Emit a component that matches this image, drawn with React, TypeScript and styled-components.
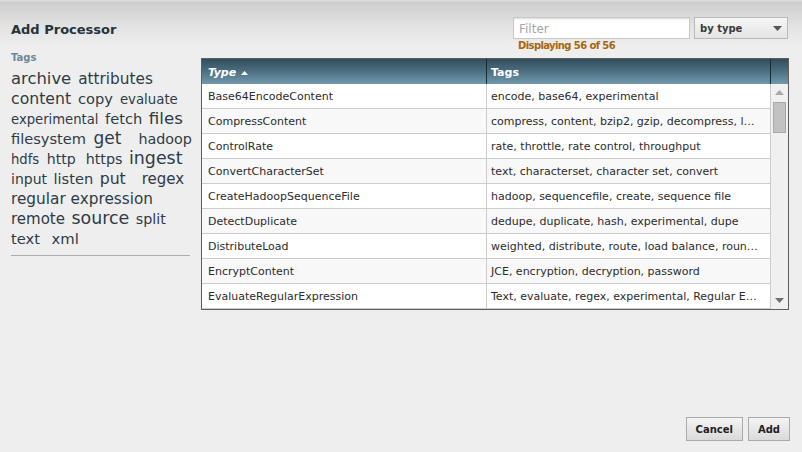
import React from 'react';
import styled, { createGlobalStyle } from 'styled-components';

const GlobalStyle = createGlobalStyle`
    html, body {
        margin: 0;
        padding: 0;
    }
    body {
        font-family: "DejaVu Sans", Verdana, sans-serif;
        background: #eeeeee;
    }
`;

type Tag = { name: string; size: number; gap?: number };

// the cloud, line by line as it wraps in the dialog
const cloud: Tag[][] = [
    [{ name: 'archive', size: 16.4 }, { name: 'attributes', size: 15.3, gap: 7 }],
    [{ name: 'content', size: 15.7 }, { name: 'copy', size: 14.6, gap: 7 }, { name: 'evaluate', size: 13.3, gap: 7 }],
    [{ name: 'experimental', size: 13.2 }, { name: 'fetch', size: 14.7, gap: 6.5 }, { name: 'files', size: 16.7, gap: 6.5 }],
    [{ name: 'filesystem', size: 14.6 }, { name: 'get', size: 17, gap: 7.5 }, { name: 'hadoop', size: 14.3, gap: 17 }],
    [{ name: 'hdfs', size: 13.2 }, { name: 'http', size: 14.1, gap: 7.5 }, { name: 'https', size: 14.3, gap: 10 }, { name: 'ingest', size: 17.4, gap: 6.5 }],
    [{ name: 'input', size: 14 }, { name: 'listen', size: 14.6, gap: 6.5 }, { name: 'put', size: 15.7, gap: 6.5 }, { name: 'regex', size: 15, gap: 16 }],
    [{ name: 'regular expression', size: 15.3 }],
    [{ name: 'remote', size: 15 }, { name: 'source', size: 17.4, gap: 6.5 }, { name: 'split', size: 14.3, gap: 6.5 }],
    [{ name: 'text', size: 14.7 }, { name: 'xml', size: 14.8, gap: 11.5 }],
];

const processors = [
    { type: 'Base64EncodeContent', tags: 'encode, base64, experimental' },
    { type: 'CompressContent', tags: 'compress, content, bzip2, gzip, decompress, lzma, xz-lzma2, snappy' },
    { type: 'ControlRate', tags: 'rate, throttle, rate control, throughput' },
    { type: 'ConvertCharacterSet', tags: 'text, characterset, character set, convert' },
    { type: 'CreateHadoopSequenceFile', tags: 'hadoop, sequencefile, create, sequence file' },
    { type: 'DetectDuplicate', tags: 'dedupe, duplicate, hash, experimental, dupe' },
    { type: 'DistributeLoad', tags: 'weighted, distribute, route, load balance, round robin' },
    { type: 'EncryptContent', tags: 'JCE, encryption, decryption, password' },
    { type: 'EvaluateRegularExpression', tags: 'Text, evaluate, regex, experimental, Regular Expression' },
];

const Arrow = ({ up, color }: { up?: boolean; color: string }) => (
    <svg width="9" height="5" viewBox="0 0 9 5">
        <polygon points={up ? '0,5 9,5 4.5,0' : '0,0 9,0 4.5,5'} fill={color} />
    </svg>
);

const App = () => {
    return (
        <Dialog>
            <GlobalStyle />
            <Main>
                <Sidebar>
                    <Title>Add Processor</Title>
                    <TagsLabel>Tags</TagsLabel>
                    <Cloud>
                        {cloud.map((line, i) => (
                            <CloudLine key={i}>
                                {line.map((t) => (
                                    <CloudTag key={t.name} $size={t.size} $gap={t.gap || 0}>
                                        {t.name}
                                    </CloudTag>
                                ))}
                            </CloudLine>
                        ))}
                    </Cloud>
                    <Divider />
                </Sidebar>
                <Content>
                    <FilterRow>
                        <FilterGroup>
                            <FilterInput placeholder="Filter" />
                            <Displaying>Displaying 56 of 56</Displaying>
                        </FilterGroup>
                        <SelectBox>
                            <span>by type</span>
                            <Arrow color="#555" />
                        </SelectBox>
                    </FilterRow>
                    <Table>
                        <HeaderRow>
                            <HeaderCell $width={285} $pad={6} $italic>
                                Type
                                <SortMark>
                                    <svg width="7" height="4" viewBox="0 0 7 4">
                                        <polygon points="0,4 7,4 3.5,0" fill="#fff" />
                                    </svg>
                                </SortMark>
                            </HeaderCell>
                            <HeaderCell $width={284} $pad={4}>Tags</HeaderCell>
                            <HeaderCell $width={17} $pad={0} $last />
                        </HeaderRow>
                        <Body>
                            <Rows>
                                {processors.map((p, i) => (
                                    <Row key={p.type} $alt={i % 2 === 1}>
                                        <Cell $width={285} $pad={6}>{p.type}</Cell>
                                        <Cell $width={284} $pad={4}>{p.tags}</Cell>
                                    </Row>
                                ))}
                            </Rows>
                            <ScrollTrack>
                                <ScrollArrow>
                                    <Arrow up color="#a8a8a8" />
                                </ScrollArrow>
                                <ScrollThumb />
                                <TrackFill />
                                <ScrollArrow>
                                    <Arrow color="#707070" />
                                </ScrollArrow>
                            </ScrollTrack>
                        </Body>
                    </Table>
                </Content>
            </Main>
            <Footer>
                <Button>Cancel</Button>
                <Button>Add</Button>
            </Footer>
        </Dialog>
    );
};

export default App;

const Dialog = styled.div`
    box-sizing: border-box;
    width: 802px;
    height: 452px;
    padding: 17px 13px 11px 11px;
    display: flex;
    flex-direction: column;
    background: linear-gradient(to bottom, #e2e2e2 0px, #cdcdcd 2px, #e4e4e4 28px, #eeeeee 46px, #eeeeee 100%);
    overflow: hidden;
`;

const Main = styled.div`
    display: flex;
    align-items: flex-start;
`;

const Sidebar = styled.div`
    width: 179px;
    margin-right: 11px;
    display: flex;
    flex-direction: column;
`;

const Title = styled.div`
    margin-top: 5px;
    font-size: 13px;
    line-height: 16px;
    font-weight: bold;
    color: #27323c;
`;

const TagsLabel = styled.div`
    margin-top: 14px;
    font-size: 10px;
    line-height: 12px;
    font-weight: bold;
    color: #6d8899;
`;

const Cloud = styled.div`
    margin-top: 5px;
    font-size: 15px;
`;

const CloudLine = styled.div`
    line-height: 20px;
    white-space: nowrap;
`;

const CloudTag = styled.span<{ $size: number; $gap: number }>`
    display: inline;
    font-size: ${(p) => p.$size}px;
    line-height: 1;
    margin-left: ${(p) => p.$gap}px;
    color: #2f3b46;
    cursor: pointer;
`;

const Divider = styled.div`
    margin-top: 6px;
    height: 1px;
    background: #acacac;
`;

const Content = styled.div`
    width: 588px;
    display: flex;
    flex-direction: column;
`;

const FilterRow = styled.div`
    display: flex;
    justify-content: flex-end;
    align-items: flex-start;
    gap: 4px;
    margin-right: 1px;
`;

const FilterGroup = styled.div`
    display: flex;
    flex-direction: column;
`;

const FilterInput = styled.input`
    box-sizing: border-box;
    width: 177px;
    height: 22px;
    margin: 0;
    padding: 1px 5px 0;
    border: 1px solid #c8c8c8;
    box-shadow: inset 0 2px 2px -1px #d8d8d8;
    background: #ffffff;
    font-family: "DejaVu Sans", Verdana, sans-serif;
    font-size: 12px;
    color: #333;
    outline: none;

    &::placeholder {
        color: #a6a6a6;
    }
`;

const Displaying = styled.div`
    margin-top: 2px;
    padding-left: 5px;
    font-size: 10px;
    line-height: 10px;
    letter-spacing: -0.6px;
    font-weight: bold;
    color: #a8660c;
`;

const SelectBox = styled.div`
    box-sizing: border-box;
    width: 94px;
    height: 22px;
    padding: 1px 5px 0 5px;
    display: flex;
    align-items: center;
    justify-content: space-between;
    border: 1px solid #b9b9b9;
    background: linear-gradient(to bottom, #f6f6f6, #e4e4e4);
    font-size: 10px;
    font-weight: bold;
    color: #3a3a3a;
`;

const Table = styled.div`
    margin-top: 7px;
    border: 1px solid #5e5e5e;
    display: flex;
    flex-direction: column;
    background: #ffffff;
`;

const HeaderRow = styled.div`
    display: flex;
    height: 25px;
    background: linear-gradient(to bottom, #324d5b 0%, #4d6f82 50%, #7299ae 100%);
`;

const HeaderCell = styled.div<{ $width: number; $pad: number; $italic?: boolean; $last?: boolean }>`
    box-sizing: border-box;
    width: ${(p) => p.$width}px;
    padding: 1px 0 0 ${(p) => p.$pad}px;
    border-right: ${(p) => (p.$last ? 'none' : '1px solid #172c37')};
    display: flex;
    align-items: center;
    font-size: 11px;
    font-weight: bold;
    font-style: ${(p) => (p.$italic ? 'italic' : 'normal')};
    color: #ffffff;
`;

const SortMark = styled.span`
    display: inline-flex;
    margin-left: 5px;
    margin-top: 1px;
`;

const Body = styled.div`
    display: flex;
    height: 225px;
`;

const Rows = styled.div`
    display: flex;
    flex-direction: column;
`;

const Row = styled.div<{ $alt: boolean }>`
    display: flex;
    height: 25px;
    background: ${(p) => (p.$alt ? '#f8f8f8' : '#ffffff')};
`;

const Cell = styled.div<{ $width: number; $pad: number }>`
    box-sizing: border-box;
    width: ${(p) => p.$width}px;
    padding: 2px 11px 0 ${(p) => p.$pad}px;
    border-right: 1px solid #cccccc;
    border-bottom: 1px solid #cccccc;
    font-size: 11px;
    line-height: 22px;
    color: #2b2b2b;
    white-space: nowrap;
    overflow: hidden;
    text-overflow: ellipsis;
`;

const ScrollTrack = styled.div`
    width: 17px;
    display: flex;
    flex-direction: column;
    align-items: center;
    background: #f0f0f0;
`;

const ScrollArrow = styled.div`
    height: 17px;
    display: flex;
    align-items: center;
    justify-content: center;
`;

const ScrollThumb = styled.div`
    box-sizing: border-box;
    width: 13px;
    height: 31px;
    margin-top: 1px;
    border: 1px solid #a9a9a9;
    background: #c2c2c2;
`;

const TrackFill = styled.div`
    flex: 1;
`;

const Footer = styled.div`
    margin-top: auto;
    display: flex;
    justify-content: flex-end;
    gap: 5px;
    margin-right: -1px;
`;

const Button = styled.button`
    box-sizing: border-box;
    height: 24px;
    padding: 1px 9px 0;
    margin: 0;
    border: 1px solid #aaaaaa;
    background: linear-gradient(to bottom, #f4f4f4, #dadada);
    font-family: "DejaVu Sans", Verdana, sans-serif;
    font-size: 10px;
    font-weight: bold;
    color: #222222;
    cursor: pointer;
`;
